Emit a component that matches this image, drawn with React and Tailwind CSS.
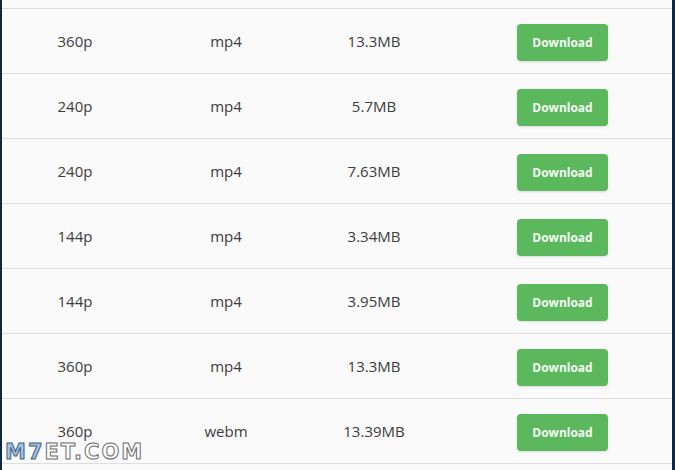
import React from "react";

const rows = [
  { q: "360p", f: "mp4", s: "13.3MB" },
  { q: "240p", f: "mp4", s: "5.7MB" },
  { q: "240p", f: "mp4", s: "7.63MB" },
  { q: "144p", f: "mp4", s: "3.34MB" },
  { q: "144p", f: "mp4", s: "3.95MB" },
  { q: "360p", f: "mp4", s: "13.3MB" },
  { q: "360p", f: "webm", s: "13.39MB" },
];

// ROW
const DownloadRow = ({ q, f, s }) => (
  <div className="h-[65px] border-t border-[#dedede] flex items-center text-[15px] text-[#3c3c3c]">
    <div className="w-[146px] text-center">{q}</div>
    <div className="w-[156px] text-center">{f}</div>
    <div className="w-[140px] text-center">{s}</div>
    <div className="flex-1 pl-[73px] pt-[3px]">
      <button className="w-[91px] h-[37px] rounded-[4px] bg-[#5cb85c] text-[#f4fbf4] text-[12px] leading-none font-bold font-['Open_Sans',sans-serif] shadow-sm">
        Download
      </button>
    </div>
  </div>
);

export default function App() {
  return (
    <div className="relative w-[675px] h-[470px] overflow-hidden bg-[#0f2740] font-['Open_Sans',sans-serif]">
      <div className="ml-[2px] w-[670px] h-full bg-[#fafafa] flex flex-col">
        <div className="h-[8px] shrink-0" />
        {rows.map((r, i) => (
          <DownloadRow key={i} {...r} />
        ))}
        <div className="flex-1 border-t border-[#dedede]" />
      </div>

      {/* watermark */}
      <div className="absolute left-[5px] top-[442px] text-[21px] leading-none font-bold tracking-[2px] font-['DejaVu_Sans',sans-serif]">
        <span className="text-[#9cc3ea] [-webkit-text-stroke:1px_#4a5d78]">M7</span>
        <span className="text-white [-webkit-text-stroke:1px_#6b6b6b]">ET.COM</span>
      </div>
    </div>
  );
}
